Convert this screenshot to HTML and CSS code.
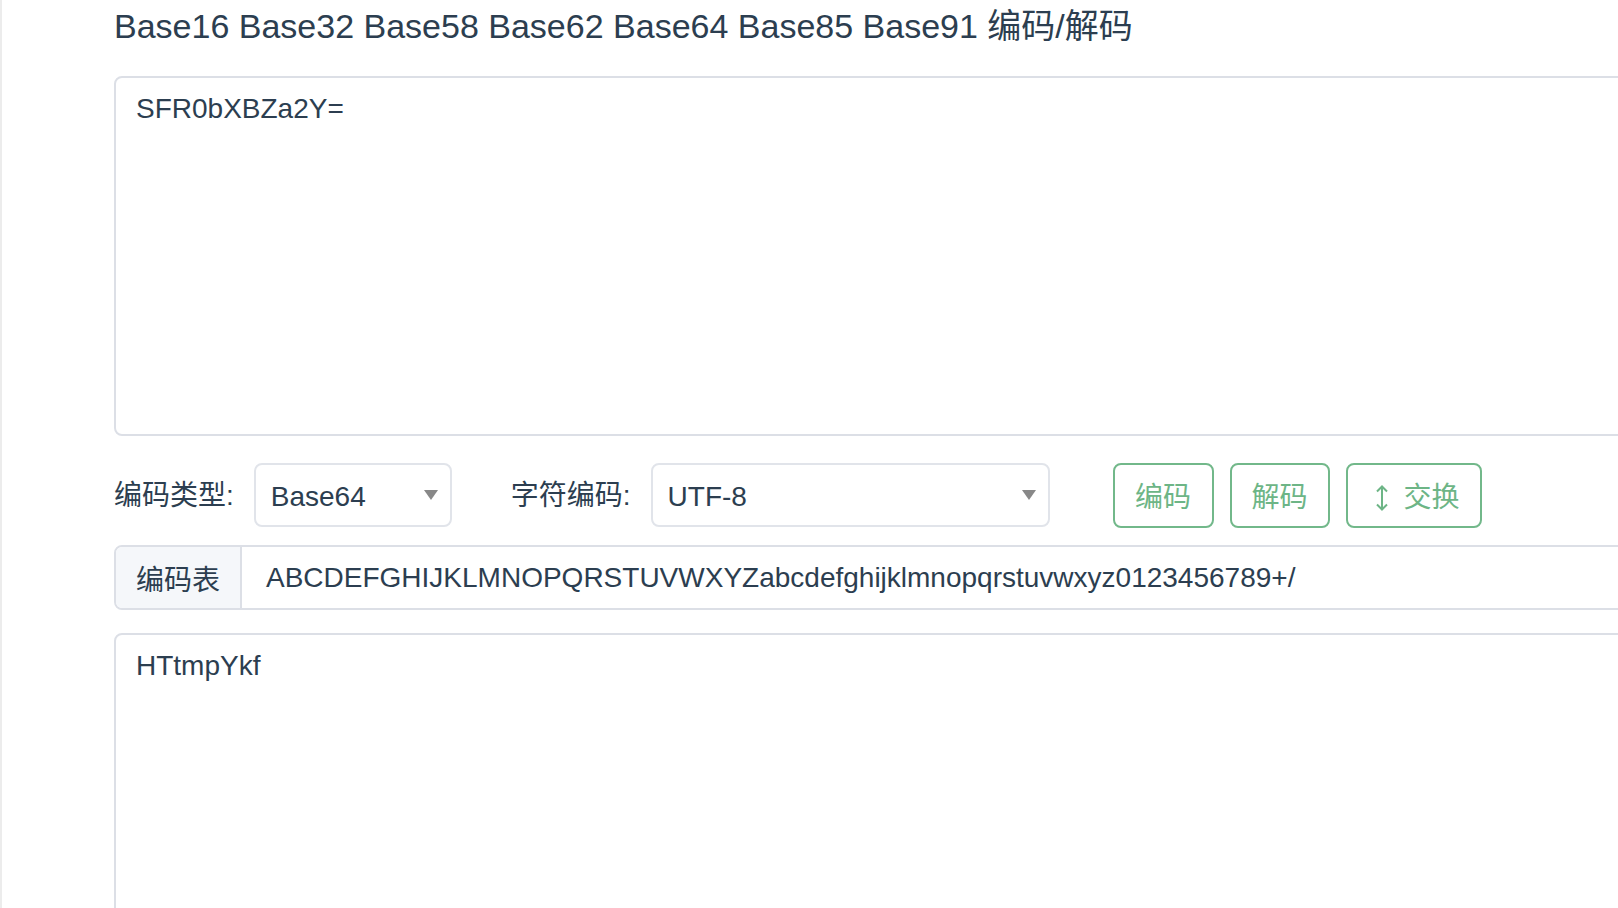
FILE: index.html
```html
<!DOCTYPE html>
<html lang="zh-CN">
<head>
<meta charset="utf-8">
<title>Base 编码/解码</title>
<link rel="stylesheet" href="styles.css">
</head>
<body>
<div class="page">
  <div class="main">
    <h1 class="title">Base16 Base32 Base58 Base62 Base64 Base85 Base91 编码/解码</h1>
    <div class="textbox textbox-input">SFR0bXBZa2Y=</div>
    <div class="toolbar">
      <span class="label">编码类型:</span>
      <div class="select select-type"><span class="select-value">Base64</span><i class="caret"></i></div>
      <span class="label label-charset">字符编码:</span>
      <div class="select select-charset"><span class="select-value">UTF-8</span><i class="caret"></i></div>
      <div class="buttons">
        <button class="btn btn-encode">编码</button>
        <button class="btn btn-decode">解码</button>
        <button class="btn btn-swap"><span class="icon"><svg width="14" height="26" viewBox="0 0 14 26"><path d="M7 1.5V24.5M2 6.5L7 1.5L12 6.5M2 19.5L7 24.5L12 19.5" fill="none" stroke="currentColor" stroke-width="2"/></svg></span><span class="btn-text">交换</span></button>
      </div>
    </div>
    <div class="table-row">
      <div class="prepend">编码表</div>
      <div class="table-value">ABCDEFGHIJKLMNOPQRSTUVWXYZabcdefghijklmnopqrstuvwxyz0123456789+/</div>
    </div>
    <div class="textbox textbox-output">HTtmpYkf</div>
  </div>
</div>
</body>
</html>
```
FILE: styles.css
```css
html, body {
  margin: 0;
  padding: 0;
  background: #ffffff;
  overflow: hidden;
}

body {
  font-family: "Liberation Sans", "Noto Sans CJK SC", sans-serif;
  color: #2c3e50;
}

.page {
  height: 908px;
  border-left: 2px solid #ececec;
  overflow: hidden;
}

.main {
  width: 1720px;
  padding-left: 112px;
  box-sizing: border-box;
}

.title {
  margin: 0;
  height: 76px;
  box-sizing: border-box;
  padding-top: 6px;
  font-size: 34px;
  line-height: 40px;
  font-weight: normal;
  white-space: nowrap;
}

.textbox {
  width: 1600px;
  box-sizing: border-box;
  border: 2px solid #dcdfe6;
  border-radius: 8px;
  padding: 10px 20px;
  font-size: 28px;
  line-height: 42px;
}

.textbox-input {
  height: 360px;
}

.textbox-output {
  margin-top: 23px;
  height: 420px;
}

.toolbar {
  display: flex;
  align-items: center;
  height: 64px;
  margin-top: 27px;
}

.label {
  font-size: 28px;
  margin-right: 20px;
  position: relative;
  top: -2px;
  white-space: nowrap;
}

.label-charset {
  margin-left: 59px;
}

.select {
  display: flex;
  align-items: center;
  height: 64px;
  box-sizing: border-box;
  border: 2px solid #e1e4ea;
  border-radius: 8px;
  padding-left: 15px;
  padding-top: 3px;
  font-size: 28px;
}

.select-type {
  width: 198px;
}

.select-charset {
  width: 399px;
}

.caret {
  margin-left: auto;
  margin-right: 12px;
  margin-top: -3px;
  width: 0;
  height: 0;
  border-left: 7.5px solid transparent;
  border-right: 7.5px solid transparent;
  border-top: 10px solid #888888;
}

.buttons {
  display: flex;
  gap: 16px;
  margin-left: 63px;
}

.btn {
  display: flex;
  align-items: center;
  justify-content: center;
  height: 65px;
  box-sizing: border-box;
  padding: 5px 20px 0;
  border: 2px solid #72b88a;
  border-radius: 8px;
  background: #ffffff;
  color: #6db586;
  font-family: "Liberation Sans", "Noto Sans CJK SC", sans-serif;
  font-size: 28px;
  line-height: 1;
}

.btn-encode {
  width: 101px;
}

.icon {
  display: flex;
  justify-content: center;
  width: 28px;
  margin-right: 8px;
}

.table-row {
  display: flex;
  height: 65px;
  width: 1600px;
  box-sizing: border-box;
  margin-top: 18px;
  border: 2px solid #dcdfe6;
  border-radius: 8px;
  overflow: hidden;
  font-size: 28px;
}

.prepend {
  display: flex;
  align-items: center;
  padding: 0 20px;
  background: #f5f7fa;
  border-right: 2px solid #dcdfe6;
  white-space: nowrap;
}

.table-value {
  display: flex;
  align-items: center;
  padding-left: 24px;
  white-space: nowrap;
}
```
